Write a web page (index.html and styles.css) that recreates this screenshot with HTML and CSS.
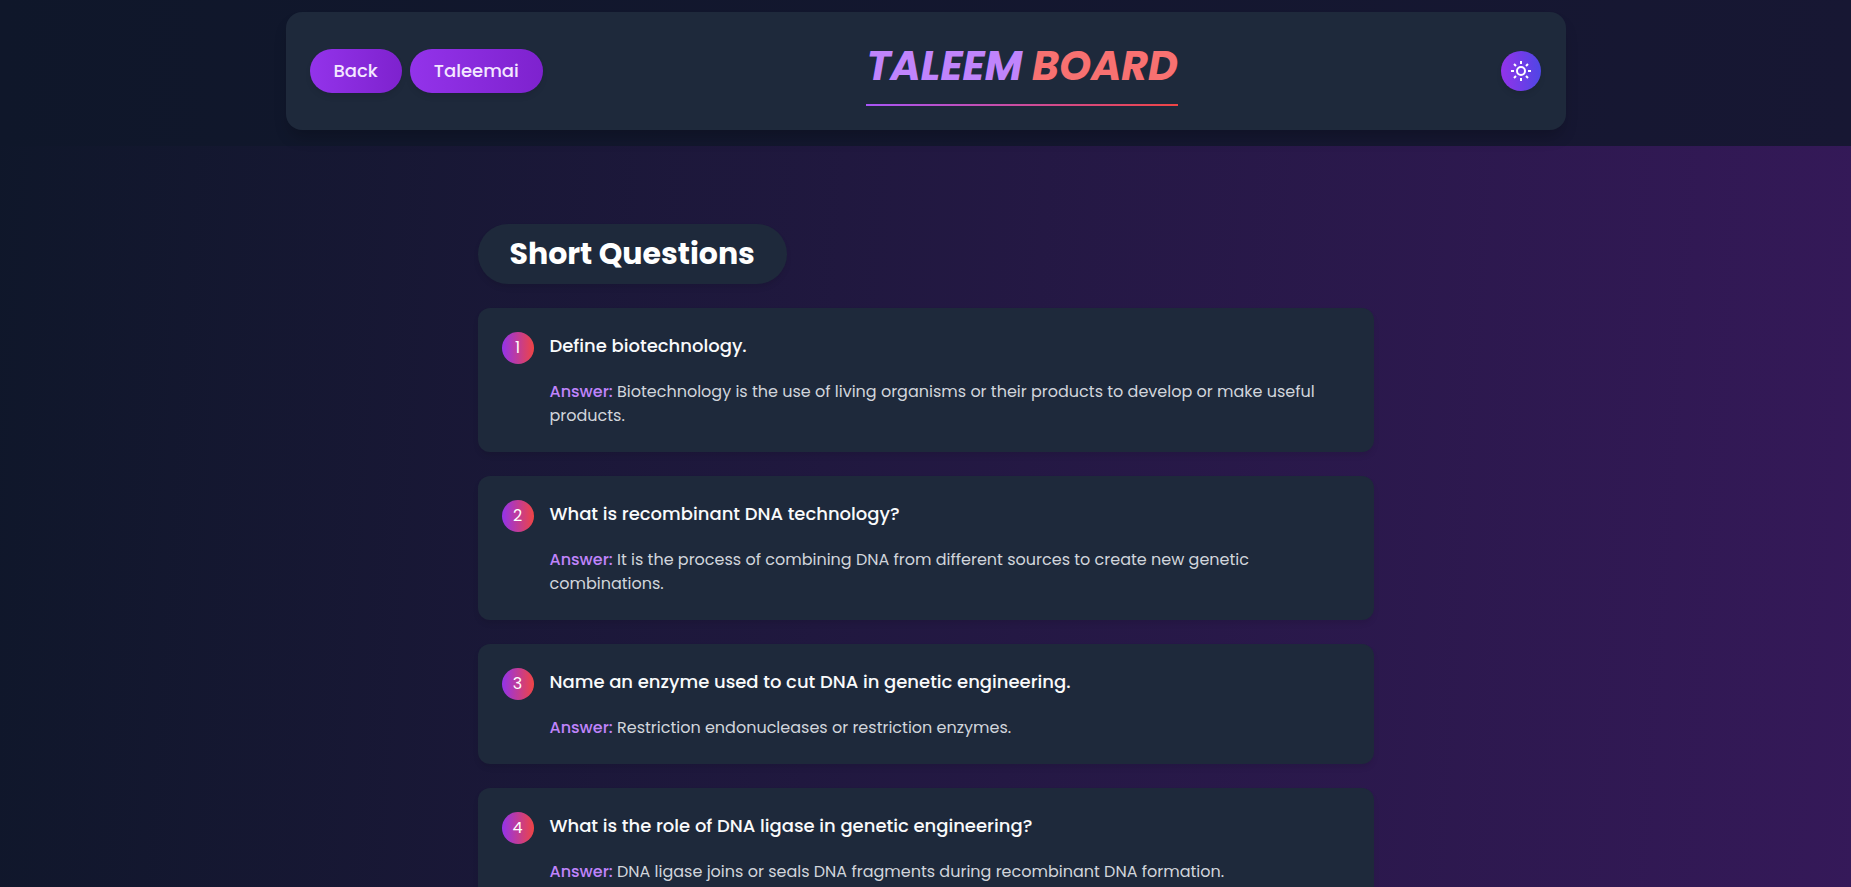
FILE: index.html
```html
<!DOCTYPE html>
<html lang="en">
<head>
<meta charset="utf-8">
<meta name="viewport" content="width=device-width, initial-scale=1">
<title>Taleem Board</title>
<link rel="stylesheet" href="styles.css">
</head>
<body>
<header class="site-header">
  <div class="header-card">
    <nav class="header-nav">
      <a class="pill" href="#back">Back</a>
      <a class="pill" href="#taleemai">Taleemai</a>
    </nav>
    <div class="logo"><span class="logo-first">TALEEM</span> <span class="logo-second">BOARD</span></div>
    <button class="theme-toggle" type="button" aria-label="Toggle theme">
      <svg viewBox="0 0 20 20" width="20" height="20" fill="none" stroke="currentColor" stroke-width="2" aria-hidden="true">
        <circle cx="10" cy="10" r="4"/>
        <path d="M10 0v3M10 17v3M0 10h3M17 10h3M3 3l2 2M15 15l2 2M3 17l2-2M15 5l2-2"/>
      </svg>
    </button>
  </div>
</header>
<main class="content">
  <h1 class="section-title">Short Questions</h1>
  <ol class="questions">
    <li class="card">
      <span class="number">1</span>
      <div class="card-body">
        <h2 class="question">Define biotechnology.</h2>
        <p class="answer"><strong class="label">Answer:</strong> Biotechnology is the use of living organisms or their products to develop or make useful products.</p>
      </div>
    </li>
    <li class="card">
      <span class="number">2</span>
      <div class="card-body">
        <h2 class="question">What is recombinant DNA technology?</h2>
        <p class="answer"><strong class="label">Answer:</strong> It is the process of combining DNA from different sources to create new genetic combinations.</p>
      </div>
    </li>
    <li class="card">
      <span class="number">3</span>
      <div class="card-body">
        <h2 class="question">Name an enzyme used to cut DNA in genetic engineering.</h2>
        <p class="answer"><strong class="label">Answer:</strong> Restriction endonucleases or restriction enzymes.</p>
      </div>
    </li>
    <li class="card">
      <span class="number">4</span>
      <div class="card-body">
        <h2 class="question">What is the role of DNA ligase in genetic engineering?</h2>
        <p class="answer"><strong class="label">Answer:</strong> DNA ligase joins or seals DNA fragments during recombinant DNA formation.</p>
      </div>
    </li>
  </ol>
</main>
</body>
</html>
```
FILE: styles.css
```css
* { box-sizing: border-box; }

html { scrollbar-width: none; }

body {
  margin: 0;
  min-height: 100vh;
  background: linear-gradient(94deg, #0f172a, #351959);
  color: #f3f4f6;
  font-family: Poppins, Inter, sans-serif;
  font-size: 16px;
  line-height: 24px;
}

.site-header {
  padding: 12px 16px 16px;
  background: linear-gradient(90deg, #0f172a, #171733);
}

.header-card {
  display: flex;
  align-items: center;
  justify-content: space-between;
  max-width: 1280px;
  margin: 0 auto;
  padding: 24px;
  border-radius: 16px;
  background: #1e293b;
  box-shadow: 0 10px 15px -3px rgba(0, 0, 0, 0.2);
}

.header-nav { display: flex; gap: 8px; }

.pill {
  padding: 8px 24px;
  border-radius: 999px;
  background: linear-gradient(90deg, #9333ea, #7e22ce);
  box-shadow: 0 4px 6px -1px rgba(0, 0, 0, 0.1);
  color: #f3e8ff;
  font-size: 18px;
  font-weight: 500;
  line-height: 28px;
  text-decoration: none;
}

.logo {
  padding-bottom: 8px;
  border-bottom: 2px solid;
  border-image: linear-gradient(90deg, #a855f7, #ef4444) 1;
  font-size: 41px;
  font-style: italic;
  font-weight: 700;
  line-height: 60px;
}

.logo-first { color: #c084fc; }
.logo-second { color: #f87171; }

.theme-toggle {
  display: grid;
  place-items: center;
  width: 40px;
  height: 40px;
  padding: 0;
  border: 0;
  border-radius: 50%;
  background: linear-gradient(90deg, #9333ea, #4f46e5);
  box-shadow: 0 4px 6px -1px rgba(0, 0, 0, 0.1);
  color: #fff;
}

.content {
  max-width: 896px;
  margin: 0 auto;
  padding: 78px 0 32px;
}

.section-title {
  width: fit-content;
  margin: 0 0 24px;
  padding: 12px 32px;
  border-radius: 999px;
  background: #1e293b;
  box-shadow: 0 4px 6px -1px rgba(0, 0, 0, 0.1);
  color: #fff;
  font-size: 30px;
  font-weight: 700;
  line-height: 36px;
}

.questions {
  display: grid;
  gap: 24px;
  margin: 0;
  padding: 0;
  list-style: none;
}

.card {
  display: flex;
  gap: 16px;
  padding: 24px;
  border-radius: 12px;
  background: #1e293b;
  box-shadow: 0 4px 6px -1px rgba(0, 0, 0, 0.1);
}

.number {
  display: grid;
  flex: none;
  place-items: center;
  width: 32px;
  height: 32px;
  border-radius: 50%;
  background: linear-gradient(90deg, #9333ea, #ef4444);
  color: #fff;
}

.card-body { flex: 1; }

.question {
  margin: 0 0 20px;
  color: #f9fafb;
  font-size: 18px;
  font-weight: 500;
  line-height: 28px;
}

.answer {
  margin: 0;
  color: #d1d5db;
}

.label {
  color: #c084fc;
  font-weight: 500;
}
```
